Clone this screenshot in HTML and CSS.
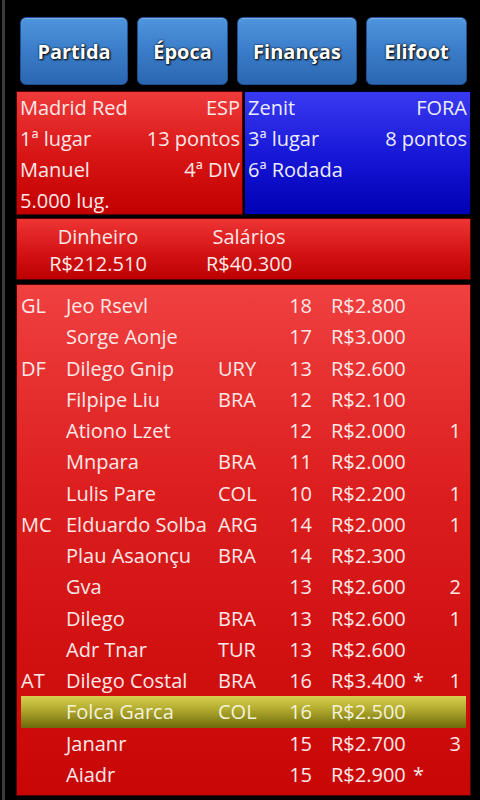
FILE: index.html
```html
<!DOCTYPE html>
<html lang="pt">
  <head>
    <meta charset="UTF-8" />
    <meta name="viewport" content="width=device-width, initial-scale=1.0" />
    <title>Elifoot</title>
    <link rel="stylesheet" href="styles.css">
  </head>
  <body>
    <div class="app">
      <div class="menu">
        <button class="menu-btn">Partida</button>
        <button class="menu-btn">Época</button>
        <button class="menu-btn">Finanças</button>
        <button class="menu-btn">Elifoot</button>
      </div>

      <div class="teams">
        <div class="team team-home">
          <div class="line"><span>Madrid Red</span><span>ESP</span></div>
          <div class="line"><span>1ª lugar</span><span>13 pontos</span></div>
          <div class="line"><span>Manuel</span><span>4ª DIV</span></div>
          <div class="line"><span>5.000 lug.</span></div>
        </div>
        <div class="team team-away">
          <div class="line"><span>Zenit</span><span>FORA</span></div>
          <div class="line"><span>3ª lugar</span><span>8 pontos</span></div>
          <div class="line"><span>6ª Rodada</span></div>
        </div>
      </div>

      <div class="finance">
        <div class="finance-col">
          <div>Dinheiro</div>
          <div>R$212.510</div>
        </div>
        <div class="finance-col">
          <div>Salários</div>
          <div>R$40.300</div>
        </div>
      </div>

      <div class="squad">
        <div class="player"><span>GL</span><span>Jeo Rsevl</span><span></span><span class="age">18</span><span class="salary">R$2.800</span><span></span><span class="num"></span></div>
        <div class="player"><span></span><span>Sorge Aonje</span><span></span><span class="age">17</span><span class="salary">R$3.000</span><span></span><span class="num"></span></div>
        <div class="player"><span>DF</span><span>Dilego Gnip</span><span>URY</span><span class="age">13</span><span class="salary">R$2.600</span><span></span><span class="num"></span></div>
        <div class="player"><span></span><span>Filpipe Liu</span><span>BRA</span><span class="age">12</span><span class="salary">R$2.100</span><span></span><span class="num"></span></div>
        <div class="player"><span></span><span>Ationo Lzet</span><span></span><span class="age">12</span><span class="salary">R$2.000</span><span></span><span class="num">1</span></div>
        <div class="player"><span></span><span>Mnpara</span><span>BRA</span><span class="age">11</span><span class="salary">R$2.000</span><span></span><span class="num"></span></div>
        <div class="player"><span></span><span>Lulis Pare</span><span>COL</span><span class="age">10</span><span class="salary">R$2.200</span><span></span><span class="num">1</span></div>
        <div class="player"><span>MC</span><span>Elduardo Solba</span><span>ARG</span><span class="age">14</span><span class="salary">R$2.000</span><span></span><span class="num">1</span></div>
        <div class="player"><span></span><span>Plau Asaonçu</span><span>BRA</span><span class="age">14</span><span class="salary">R$2.300</span><span></span><span class="num"></span></div>
        <div class="player"><span></span><span>Gva</span><span></span><span class="age">13</span><span class="salary">R$2.600</span><span></span><span class="num">2</span></div>
        <div class="player"><span></span><span>Dilego</span><span>BRA</span><span class="age">13</span><span class="salary">R$2.600</span><span></span><span class="num">1</span></div>
        <div class="player"><span></span><span>Adr Tnar</span><span>TUR</span><span class="age">13</span><span class="salary">R$2.600</span><span></span><span class="num"></span></div>
        <div class="player"><span>AT</span><span>Dilego Costal</span><span>BRA</span><span class="age">16</span><span class="salary">R$3.400</span><span class="star">*</span><span class="num">1</span></div>
        <div class="player player-selected"><span></span><span>Folca Garca</span><span>COL</span><span class="age">16</span><span class="salary">R$2.500</span><span></span><span class="num"></span></div>
        <div class="player"><span></span><span>Jananr</span><span></span><span class="age">15</span><span class="salary">R$2.700</span><span></span><span class="num">3</span></div>
        <div class="player"><span></span><span>Aiadr</span><span></span><span class="age">15</span><span class="salary">R$2.900</span><span class="star">*</span><span class="num"></span></div>
      </div>
    </div>
  </body>
</html>
```

FILE: styles.css
```css
html,
body {
  margin: 0;
  height: 100%;
  background-color: #000;
  overflow: hidden;
}
body {
  font-family: "Open Sans", "DejaVu Sans", sans-serif;
  font-size: 20px;
  color: #fde8e8;
}
.app {
  height: 100%;
  box-sizing: border-box;
  margin-left: 2px;
  border-left: 3px solid #3a3a3a;
  padding: 17px 9px 0 11px;
}
.menu {
  display: grid;
  grid-template-columns: 108px 91px 120px 101px;
  gap: 9px;
  padding: 0 4px;
}
.menu-btn {
  height: 68px;
  padding: 0;
  border: 1px solid #1f4f8c;
  border-radius: 6px;
  background: linear-gradient(#4f95de, #3a7cc8 50%, #2b67b2);
  box-shadow: inset 0 1px 0 rgba(255, 255, 255, 0.25);
  font-family: "Open Sans", sans-serif;
  font-size: 20px;
  font-weight: bold;
  color: #fff;
  text-shadow: 1px 1px 2px #000, 0 0 2px #000;
}
.teams {
  display: grid;
  grid-template-columns: 227px 227px;
  gap: 1px;
  margin-top: 6px;
}
.team {
  height: 124px;
  box-sizing: border-box;
  padding: 0 2px 0 3px;
  line-height: 31px;
  border: 1px solid #500;
}
.team-home {
  background: linear-gradient(#f03a3a, #d81616 50%, #c20000);
}
.team-away {
  padding: 0 3px 0 3px;
  border-color: #002;
  color: #ececff;
  background: linear-gradient(#3a3af2, #1818d8 50%, #0000b4);
}
.line {
  display: flex;
  justify-content: space-between;
  white-space: nowrap;
}
.finance {
  display: grid;
  grid-template-columns: 162px 140px;
  margin-top: 3px;
  height: 62px;
  box-sizing: border-box;
  padding-top: 4px;
  line-height: 27px;
  text-align: center;
  border: 1px solid #500;
  background: linear-gradient(#ee3434, #d41414 55%, #bc0000);
}
.squad {
  margin-top: 4px;
  height: 512px;
  box-sizing: border-box;
  padding: 5px 4px 0;
  border: 1px solid #500;
  background: linear-gradient(#f04040, #dc1e1e 40%, #c80606);
}
.player {
  display: grid;
  grid-template-columns: 45px 152px 70px 24px 98px 21px 30px;
  height: 31.25px;
  line-height: 31px;
  white-space: nowrap;
}
.age,
.num {
  text-align: right;
}
.salary {
  padding-left: 19px;
}
.star {
  padding-left: 3px;
}
.player-selected {
  background: linear-gradient(#d6d050, #b4ac30 40%, #6c6a0a);
  color: #f4f2d8;
}
```
